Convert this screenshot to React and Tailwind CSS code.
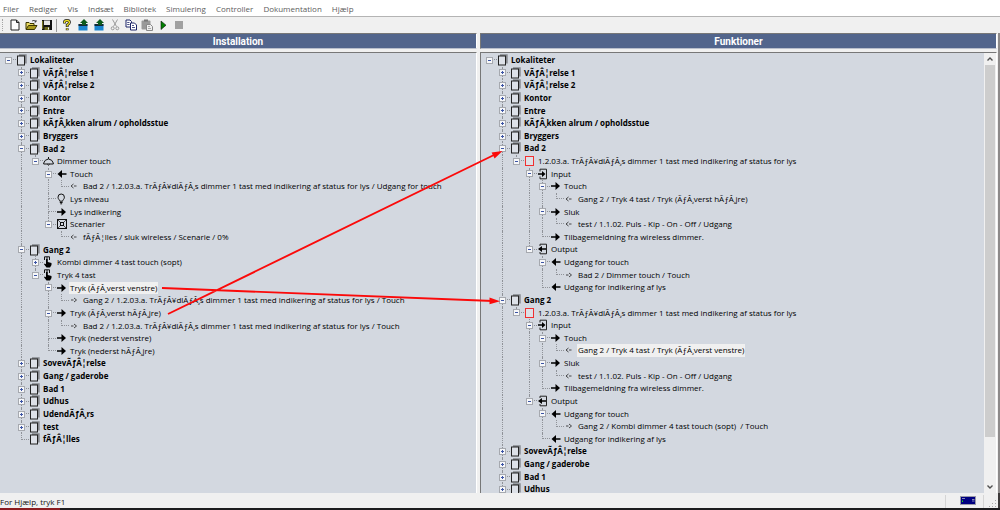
import React from "react";

const menuItems = ["Filer", "Rediger", "Vis", "Indsæt", "Bibliotek", "Simulering", "Controller", "Dokumentation", "Hjælp"];

const DIMMER = "1.2.03.a. TrÃƒÂ¥dlÃƒÂ¸s dimmer 1 tast med indikering af status for lys";

const room = (label, children) => ({ icon: "page", bold: true, label, children });
const closed = (label) => ({ icon: "page", bold: true, label, closed: true });

const firstRooms = [
  closed("VÃƒÂ¦relse 1"),
  closed("VÃƒÂ¦relse 2"),
  closed("Kontor"),
  closed("Entre"),
  closed("KÃƒÂ¸kken alrum / opholdsstue"),
  closed("Bryggers"),
];

const installation = room("Lokaliteter", [
  ...firstRooms,
  room("Bad 2", [
    { icon: "lamp", label: "Dimmer touch", children: [
      { icon: "left", label: "Touch", children: [
        { icon: "from", label: `Bad 2 / ${DIMMER} / Udgang for touch` },
      ]},
      { icon: "bulb", label: "Lys niveau" },
      { icon: "right", label: "Lys indikering" },
      { icon: "scene", label: "Scenarier", children: [
        { icon: "from", label: "fÃƒÂ¦lles / sluk wireless / Scenarie / 0%" },
      ]},
    ]},
  ]),
  room("Gang 2", [
    { icon: "hand", label: "Kombi dimmer 4 tast touch (sopt)", closed: true },
    { icon: "hand", label: "Tryk 4 tast", children: [
      { icon: "right", label: "Tryk (ÃƒÂ¸verst venstre)", selected: true, children: [
        { icon: "to", label: `Gang 2 / ${DIMMER} / Touch` },
      ]},
      { icon: "right", label: "Tryk (ÃƒÂ¸verst hÃƒÂ¸jre)", children: [
        { icon: "to", label: `Bad 2 / ${DIMMER} / Touch` },
      ]},
      { icon: "right", label: "Tryk (nederst venstre)" },
      { icon: "right", label: "Tryk (nederst hÃƒÂ¸jre)" },
    ]},
  ]),
  closed("SovevÃƒÂ¦relse"),
  closed("Gang / gaderobe"),
  closed("Bad 1"),
  closed("Udhus"),
  closed("UdendÃƒÂ¸rs"),
  closed("test"),
  room("fÃƒÂ¦lles"),
]);

const dimmerFunction = (touchFrom, outputTo, selected) => ({
  icon: "func", label: DIMMER, children: [
    { icon: "input", label: "Input", children: [
      { icon: "right", label: "Touch", children: [{ icon: "from", label: touchFrom, selected }] },
      { icon: "right", label: "Sluk", children: [
        { icon: "from", label: "test / 1.1.02. Puls - Kip - On - Off / Udgang" },
      ]},
      { icon: "right", label: "Tilbagemeldning fra wireless dimmer." },
    ]},
    { icon: "output", label: "Output", children: [
      { icon: "left", label: "Udgang for touch", children: [{ icon: "to", label: outputTo }] },
      { icon: "left", label: "Udgang for indikering af lys" },
    ]},
  ],
});

const functions = room("Lokaliteter", [
  ...firstRooms,
  room("Bad 2", [
    dimmerFunction("Gang 2 / Tryk 4 tast / Tryk (ÃƒÂ¸verst hÃƒÂ¸jre)", "Bad 2 / Dimmer touch / Touch"),
  ]),
  room("Gang 2", [
    dimmerFunction("Gang 2 / Tryk 4 tast / Tryk (ÃƒÂ¸verst venstre)", "Gang 2 / Kombi dimmer 4 tast touch (sopt)  / Touch", true),
  ]),
  closed("SovevÃƒÂ¦relse"),
  closed("Gang / gaderobe"),
  closed("Bad 1"),
  closed("Udhus"),
]);

const indents = ["w-[13px]", "w-[14px]", "w-[13px]", "w-[13px]", "w-[14px]"];

// guides[i] tells whether the line of level i runs on past this row
function flatten(node, guides = [], hasNext = false) {
  const row = { node, guides, hasNext };
  const kids = node.children || [];
  return [
    row,
    ...kids.flatMap((kid, i) => flatten(kid, [...guides, hasNext], i < kids.length - 1)),
  ];
}

const solidArrow = "M0 5.2H4.5V2L9 6L4.5 10V6.8H0Z";

const nodeIcons = {
  page: (
    <>
      <path d="M2 1.2H8.8V9.5" fill="none" stroke="#85888d" strokeWidth="1.8" />
      <rect x="0.5" y="2" width="7" height="9" fill="#dde1e8" stroke="#222" />
    </>
  ),
  func: <rect x="0.5" y="1.5" width="8" height="9" fill="#dde0e6" stroke="#f03030" />,
  left: <path d={solidArrow} transform="matrix(-1 0 0 1 9.5 0)" />,
  right: <path d={solidArrow} />,
  from: <path d="M3.5 4L1 6L3.5 8M4 6H6.5" fill="none" stroke="#333" strokeWidth="0.9" />,
  to: <path d="M4 4L6.5 6L4 8M1 6H3.5" fill="none" stroke="#333" strokeWidth="0.9" />,
  lamp: <path d="M0.7 9V8L2.3 5.3Q5.5 2.6 8.7 5.3L10.3 8V9ZM5.5 2V4M4.4 9.2Q5.5 11.2 6.6 9.2" fill="none" stroke="#111" transform="translate(-1 0)" />,
  bulb: <path d="M3.8 8.2C3.8 6.8 2 6.2 2 4.2A3.1 3.1 0 0 1 8.4 4.2C8.4 6.2 6.6 6.8 6.6 8.2ZM3.8 9.5H6.6M4.3 10.8H6.1" fill="none" stroke="#111" transform="translate(-1 0)" />,
  scene: (
    <g fill="none" stroke="#111">
      <rect x="0.5" y="1.5" width="9" height="9" />
      <rect x="3.5" y="4.5" width="3" height="3" />
      <path d="M1 2L3.5 4.5M9 2L6.5 4.5M1 10L3.5 7.5M9 10L6.5 7.5" strokeWidth="0.7" />
    </g>
  ),
  hand: (
    <g transform="translate(-1 0)">
      <path d="M1.5 4V0.8H6.5V4M4 0.8V3" fill="none" stroke="#111" />
      <path d="M3 3H4.8V6L8.5 7V9L7 11.5H3.5L1 8.3L1.7 7.5L3 8.3Z" />
    </g>
  ),
  input: (
    <>
      <path d="M2 8.5V10.8H8.5V1.2H2V3.5" fill="none" stroke="#222" />
      <path d="M0 5.2H4V3L7.5 6L4 9V6.8H0Z" />
    </>
  ),
  output: (
    <>
      <path d="M2 3V1.2H8.5V10.8H2V9" fill="none" stroke="#222" />
      <path d="M8 5.2H4V3L0 6L4 9V6.8H8Z" />
    </>
  ),
};

function TreeRow({ node, guides, hasNext }) {
  const expandable = node.closed || node.children;
  const nested = guides.length > 0;
  return (
    <li
      role="treeitem"
      aria-level={guides.length + 1}
      aria-expanded={expandable ? !node.closed : undefined}
      aria-selected={!!node.selected}
      className="flex min-h-0 items-stretch whitespace-pre"
    >
      {guides.map((on, i) => (
        <span key={i} className={`${indents[i]} shrink-0 pl-[6px]`}>
          {on && <span className="block h-full border-l border-dotted border-[#8f9298]" />}
        </span>
      ))}
      <span className="grid w-[15px] shrink-0 grid-rows-2 pr-px pl-[6px]">
        <span className={`col-start-1 row-start-1 border-b border-dotted border-b-[#8f9298] ${nested ? "border-l border-l-[#8f9298]" : ""}`} />
        <span className={`col-start-1 row-start-2 ${nested && hasNext ? "border-l border-dotted border-[#8f9298]" : ""}`} />
        {expandable && (
          <button
            type="button"
            aria-label={node.closed ? "Fold ud" : "Fold sammen"}
            className="z-10 col-start-1 row-span-2 row-start-1 -ml-[3px] h-[7px] w-[7px] self-center rounded-[1px] bg-[#f6f7f9]"
          >
            <svg viewBox="0 0 7 7" className="block h-[7px] w-[7px]" fill="none">
              <rect x="0.5" y="0.5" width="6" height="6" stroke="#a6a9af" />
              <path d={node.closed ? "M2 3.5H5M3.5 2V5" : "M2 3.5H5"} stroke="#3c55a5" />
            </svg>
          </button>
        )}
      </span>
      <svg viewBox="0 0 12 12" className="h-3 w-3 shrink-0 overflow-visible">{nodeIcons[node.icon]}</svg>
      <span className={`px-px leading-3 ${node.bold ? "font-bold" : ""} ${node.selected ? "bg-[#f0f0f0]" : ""}`}>
        {node.label}
      </span>
    </li>
  );
}

function Tree({ root, label, className }) {
  return (
    <ul role="tree" aria-label={label} className={`grid auto-rows-fr pt-px pl-[2px] text-[8px] text-black ${className}`}>
      {flatten(root).map((row, i) => <TreeRow key={i} {...row} />)}
    </ul>
  );
}

function Pane({ title, children, className = "" }) {
  return (
    <section className="flex min-h-0 min-w-0 flex-col gap-[3px]">
      <h2 className={`h-4 shrink-0 border-t border-r border-b border-t-[#777] border-r-white border-b-[#b9bfcc] bg-[#52658c] text-center font-[Roboto,sans-serif] text-[10px] leading-[15px] font-bold text-white ${className}`}>
        {title}
      </h2>
      <div className={`flex min-h-0 flex-1 overflow-hidden border-t border-r border-t-[#777] border-r-white bg-[#d3d8e0] ${className}`}>
        {children}
      </div>
    </section>
  );
}

const controllerIcon = (
  <>
    <rect x="1.5" y="5" width="9" height="6.5" fill="#1d86cf" />
    <path d="M1.5 6H10.5" stroke="#111" strokeWidth="1.6" />
    <path d="M5 6V4H3L7 0L11 4H9V6Z" fill="#0d5b1c" />
  </>
);

const tools = [
  { name: "Ny", art: <path d="M2 1H7.5L10 3.5V11H2ZM7.5 1V3.5H10" fill="#fff" stroke="#222" /> },
  { name: "Åbn", art: (
    <>
      <path d="M1 10V3.5H4L5 4.5H9V6" fill="#e8d860" stroke="#3a3500" />
      <path d="M1 10.5L3.5 6.5H12L9.5 10.5Z" fill="#a99a1c" stroke="#3a3500" />
      <path d="M7 2Q9 0.5 11 2.5M11 1V3H9.5" fill="none" stroke="#222" strokeWidth="0.8" />
    </>
  )},
  { name: "Gem", art: (
    <>
      <rect x="1" y="1" width="10" height="10" fill="#111" />
      <rect x="3" y="1.5" width="6" height="4.5" fill="#e6e6e6" />
      <path d="M1.7 2V10" stroke="#8a8620" />
      <rect x="3.5" y="8" width="5" height="3" fill="#6b681c" />
      <rect x="7" y="8.5" width="1" height="2" fill="#fff" />
    </>
  ), divider: true },
  { name: "Hjælp", art: (
    <g fill="none">
      <path d="M3.5 4.5V3Q3.5 1.5 6 1.5T8.5 3.5Q8.5 4.5 6.2 6V8M6.2 9.2V11.2" stroke="#222" strokeWidth="2.8" />
      <path d="M3.5 4V3Q3.5 1.5 6 1.5T8.5 3.5Q8.5 4.5 6.2 6V7.5M6.2 9.5V11" stroke="#f0e020" strokeWidth="1.3" />
    </g>
  )},
  { name: "Hent fra controller", art: controllerIcon },
  { name: "Send til controller", art: controllerIcon },
  { name: "Klip", art: (
    <g fill="none" stroke="#9a9a9a">
      <path d="M3.5 0.5L7.5 7.5M8.5 0.5L4.5 7.5" />
      <circle cx="3.7" cy="9.3" r="1.5" />
      <circle cx="8.3" cy="9.3" r="1.5" />
    </g>
  )},
  { name: "Kopier", art: (
    <g fill="#fff" stroke="#1c2468">
      <path d="M1 1H5L6.5 2.5V8H1Z" />
      <path d="M5.5 4H9.5L11.5 6V11H5.5Z" />
      <path d="M2.2 3.5H4.5M2.2 5.5H4.5M7 6.5H9M7 8.5H10" strokeWidth="0.8" />
    </g>
  )},
  { name: "Sæt ind", art: (
    <>
      <rect x="0.5" y="1.5" width="9" height="9" rx="1" fill="#999" />
      <rect x="3" y="0.5" width="4" height="2" fill="#777" />
      <path d="M5.5 5.5H9.5L11.5 7.5V11.5H5.5Z" fill="#eee" stroke="#888" />
      <path d="M7 7.5H9M7 9.5H10" stroke="#999" strokeWidth="0.8" />
    </>
  )},
  { name: "Start", art: <path d="M4 2L9 6.2L4 10.5Z" fill="#008000" stroke="#111" strokeWidth="0.6" /> },
  { name: "Stop", art: <rect x="2" y="2" width="8" height="8" fill="#a0a0a0" /> },
];

// the red links between buttons and the functions they drive
function Links() {
  return (
    <svg viewBox="0 0 1000 510" className="pointer-events-none absolute top-0 left-0 z-20 h-[510px] w-[1000px]">
      <path d="M162 288L493 301M168 314L496 154" stroke="#fb0a0a" strokeWidth="1.9" fill="none" />
      <path d="M500 301.3L489.5 297.5V304.3ZM502.5 151L491.6 152.6L494.6 158.6Z" fill="#fb0a0a" />
    </svg>
  );
}

export default function App() {
  return (
    <div className="relative flex h-screen flex-col overflow-hidden bg-[#f0f0f0] font-['Open_Sans','Noto_Sans',sans-serif]">
      <nav className="flex h-[17px] shrink-0 gap-[10px] border-b border-[#b4b4b4] bg-white pt-px pl-[3px] text-[8px] leading-4 text-[#5d5d5d]">
        {menuItems.map((item) => <button key={item} type="button">{item}</button>)}
      </nav>

      <div role="toolbar" aria-label="Værktøjer" className="flex h-4 shrink-0 items-center pl-[2px]">
        <span className="mr-1 h-3 border-l border-dotted border-[#a5a5a5]" />
        {tools.map((tool) => (
          <React.Fragment key={tool.name}>
            <button type="button" aria-label={tool.name} className="flex w-4 shrink-0 justify-center">
              <svg viewBox="0 0 12 12" className="h-3 w-3 overflow-visible">{tool.art}</svg>
            </button>
            {tool.divider && <span className="mr-[2px] ml-px h-[13px] border-l border-[#999]" />}
          </React.Fragment>
        ))}
      </div>

      <main className="grid min-h-0 flex-1 grid-cols-[477fr_517fr] grid-rows-1 gap-[3px] border-r-2 border-[#8d8a8a] pr-px">
        <Pane title="Installation">
          <Tree root={installation} label="Installation" className="h-[393px]" />
        </Pane>
        <Pane title="Funktioner" className="border-l border-l-[#777]">
          <Tree root={functions} label="Funktioner" className="h-[443px] min-w-0 flex-1" />
          <div className="flex w-3 shrink-0 flex-col bg-[#f0f0f0] px-px">
            <button type="button" aria-label="Rul op" className="flex h-3 shrink-0 items-center justify-center">
              <svg viewBox="0 0 6 4" className="h-1 w-[6px]"><path d="M0.5 3.5L3 1L5.5 3.5" fill="none" stroke="#505050" strokeWidth="1.4" /></svg>
            </button>
            <div className="flex flex-1 flex-col">
              <div className="grow-[372] bg-[#cdcdcd]" />
              <div className="grow-[44]" />
            </div>
            <button type="button" aria-label="Rul ned" className="flex h-3 shrink-0 items-center justify-center">
              <svg viewBox="0 0 6 4" className="h-1 w-[6px]"><path d="M0.5 0.5L3 3L5.5 0.5" fill="none" stroke="#505050" strokeWidth="1.4" /></svg>
            </button>
          </div>
        </Pane>
      </main>

      <footer className="flex h-[15px] shrink-0 items-stretch border-r-2 border-[#3d3a3a] pt-[2px] text-[8px] leading-[13px] text-[#151515]">
        <p className="flex-1">For Hjælp, tryk F1</p>
        <div className="flex w-[39px] justify-center border-x border-[#d5d5d5] pt-px pl-[6px]">
          <svg viewBox="0 0 16 9" className="h-[9px] w-4">
            <rect x="0.5" y="0.5" width="15" height="8" fill="#000080" stroke="#9a9aa8" />
            <path d="M2 2.5H5M12 3.5H14.5M12 5H14.5" stroke="#8888b8" />
            <rect x="2" y="4.5" width="1" height="1.5" fill="#20e020" />
          </svg>
        </div>
        <svg viewBox="0 0 14 13" className="h-[13px] w-[14px]" fill="#aaa">
          <path d="M11 5H12V6H11ZM11 8H12V9H11ZM11 11H12V12H11ZM8 8H9V9H8ZM8 11H9V12H8ZM5 11H6V12H5Z" />
        </svg>
      </footer>
      <div className="flex h-[2px] shrink-0 bg-[#1c1c1e]">
        <div className="w-[60px] bg-[#8a1c20]" />
      </div>

      <Links />
    </div>
  );
}
